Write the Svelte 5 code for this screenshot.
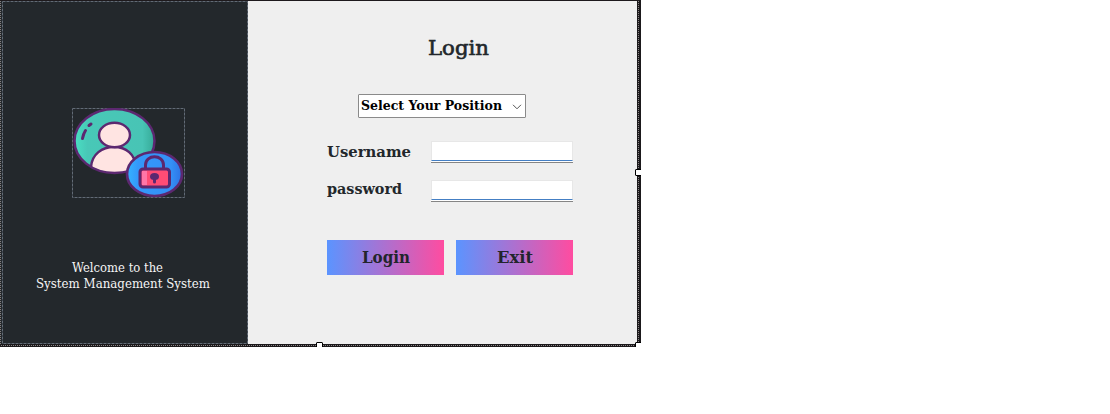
<script>
  const fields = ['Username', 'password'];
  const widths = { Username: 84, password: 75 };
</script>

{#snippet label(text, width, size, weight = 700)}
  <svg class="label" {width} height="24" font-size={size} font-weight={weight} aria-label={text}>
    <text x="0" y="18" textLength={width} lengthAdjust="spacingAndGlyphs">{text}</text>
  </svg>
{/snippet}

{#snippet dashes(w, h)}
  <svg class="dashes" width={w} height={h}>
    <rect x=".5" y=".5" width={w - 1} height={h - 1} fill="none" stroke="#626b76" stroke-dasharray="3 1" />
  </svg>
{/snippet}

<main class="window">
  <aside>
    <div class="outline">{@render dashes(246, 343)}</div>
    <div class="picture">
      {@render dashes(113, 90)}
      <svg class="users" width="113" height="90" viewBox="0 0 113 90">
        <defs>
          <clipPath id="disc"><ellipse cx="42.5" cy="33" rx="39.5" ry="31.5" /></clipPath>
          <linearGradient id="teal"><stop offset="0" stop-color="#49e0c3" /><stop offset=".16" stop-color="#48c8b7" /><stop offset=".85" stop-color="#48c4b5" /><stop offset="1" stop-color="#36a997" /></linearGradient>
          <linearGradient id="blue"><stop offset="0" stop-color="#35b4ff" /><stop offset=".2" stop-color="#3498fb" /><stop offset=".8" stop-color="#3490f6" /><stop offset="1" stop-color="#2d72e4" /></linearGradient>
        </defs>
        <ellipse cx="42.5" cy="33" rx="40" ry="32" fill="url(#teal)" />
        <g clip-path="url(#disc)" fill="#ffe4e2" stroke="#5c2870" stroke-width="2.5">
          <path d="M19 68V59C20 46 30 39 42 39S63 46 64 59V68Z" />
          <ellipse cx="42.5" cy="27" rx="15.5" ry="12.2" />
        </g>
        <ellipse cx="42.5" cy="33" rx="40" ry="32" fill="none" stroke="#5c2870" stroke-width="2.5" />
        <path d="M10.5 30.5Q11.5 25.5 13.5 22.5M17 17.5L19 16" fill="none" stroke="#5c2870" stroke-width="3" stroke-linecap="round" />
        <ellipse cx="82.5" cy="66" rx="27.5" ry="22" fill="url(#blue)" stroke="#5c2870" stroke-width="2.7" />
        <path d="M73.5 62V57C73.5 46 91.5 46 91.5 57V62" fill="none" stroke="#5c2870" stroke-width="3" />
        <rect x="68" y="61" width="29.5" height="18" rx="3" fill="#ff4c75" stroke="#5c2870" stroke-width="3" />
        <path d="M70 63H75V77H70Z" fill="#ff76a7" />
        <ellipse cx="82.5" cy="68.5" rx="4.5" ry="3.6" fill="#5c2870" />
        <path d="M82.5 69V74" stroke="#5c2870" stroke-width="3" stroke-linecap="round" />
      </svg>
    </div>
    <div class="welcome">
      {@render label('Welcome to the', 91, 12, 400)}
      {@render label('System Management System', 174, 12, 400)}
    </div>
  </aside>

  <section>
    <h1>{@render label('Login', 61, 20, 400)}</h1>
    <div class="select" role="combobox" aria-expanded="false" aria-controls="positions" tabindex="0">
      {@render label('Select Your Position', 141, 12.2)}
      <svg width="10" height="6" viewBox="0 0 10 6"><path d="M1 .8L5 4.8L9 .8" fill="none" stroke="#555" /></svg>
    </div>
    <div class="fields">
      {#each fields as name}
        <div class="field">
          {@render label(name, widths[name], 15)}
          <div class="entry"><input aria-label={name} type={name === 'password' ? 'password' : 'text'} /></div>
        </div>
      {/each}
    </div>
    <div class="actions">
      <button>{@render label('Login', 48, 16)}</button>
      <button>{@render label('Exit', 36, 16)}</button>
    </div>
  </section>

  <svg class="selection" width="641" height="347">
    <path d="M0 .5H641" stroke="#1d191c" />
    <path d="M.5 1V345" stroke="#85807f" stroke-dasharray="1 1" />
    <path d="M637 0H641V347H0V344H637Z" fill="#1b191b" />
    <path d="M638.5 1V343M1 345.5H638" stroke="#8b8585" stroke-dasharray="1 1" />
    <path d="M641 169H636L635 170V175L636 176H641M316 347V343L317 342H322L323 343V347" fill="#000" />
    <path d="M636 170H641V175H636ZM317 343H322V347H317ZM636 343H641V347H636Z" fill="#fff" />
    <path d="M635 347V343L636 342H641V343H636V347Z" fill="#000" />
  </svg>
</main>

<style>
  :global(body) { margin: 0; background: #fff; }
  .window { position: relative; display: flex; width: 641px; height: 347px; background: #efefef; font-family: "DejaVu Serif", serif; color: #22272b; }
  svg { display: block; flex: none; }
  .label { overflow: visible; fill: currentColor; }
  aside { position: relative; box-sizing: border-box; width: 248px; height: 344px; padding-top: 108px; background: #23282c; color: #f5f5f5; }
  .outline { position: absolute; top: 1px; left: 2px; }
  .picture { position: relative; width: 113px; height: 90px; margin-left: 72px; }
  .dashes { position: absolute; inset: 0; }
  .picture .users { position: relative; }
  .welcome { display: flex; flex-direction: column; align-items: center; width: 174px; margin: 56px 0 0 36px; }
  .welcome .label { height: 16px; }
  .welcome .label:first-child { margin-right: 11px; }
  section { box-sizing: border-box; width: 389px; padding: 37px 0 0 79px; }
  h1 { margin: 0 0 33px 101px; }
  h1 .label { stroke: currentColor; stroke-width: .6px; }
  .select { box-sizing: border-box; display: flex; align-items: center; gap: 10px; width: 168px; height: 24px; margin-left: 31px; padding: 0 0 4px 2px; border: 1px solid #8a8a8a; border-radius: 1px; background: #fff; color: #000; }
  .select svg:last-child { margin-top: 5px; }
  .fields { display: grid; gap: 17px; margin-top: 23px; }
  .field { display: flex; justify-content: space-between; width: 246px; height: 22px; }
  .field:first-child .label { margin-top: -2px; }
  .field:last-child .label { margin-top: -4px; }
  .entry { box-sizing: border-box; width: 142px; height: 22px; padding-bottom: 1px; border-bottom: 1px solid #858585; background: #fff; }
  input { display: block; box-sizing: border-box; width: 142px; height: 20px; border: solid #e7e7e7; border-width: 1px 1px 0; border-bottom: 1px solid #447fc4; border-radius: 0; padding: 0; background: #fff; outline: none; }
  .actions { display: flex; gap: 12px; margin-top: 38px; }
  button { display: flex; justify-content: center; align-items: flex-start; box-sizing: border-box; width: 117px; height: 35px; border: 0; padding: 5px 0 0; background: linear-gradient(90deg, #5b94ff, #ff4ca0); color: #22252c; font-family: inherit; }
  .selection { position: absolute; inset: 0; pointer-events: none; }
</style>
